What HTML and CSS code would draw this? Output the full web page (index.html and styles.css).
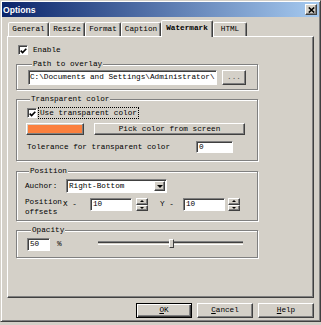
FILE: index.html
```html
<!DOCTYPE html>
<html>
<head>
<meta charset="utf-8">
<title>Options</title>
<link rel="stylesheet" href="styles.css">
</head>
<body>
<div class="window">
  <div class="titlebar">
    <span class="title">Options</span>
    <span class="close"><svg width="7" height="6" viewBox="0 0 7 6"><path d="M0.8 0.5 L6.2 5.5 M6.2 0.5 L0.8 5.5" stroke="#000" stroke-width="1.6"/></svg></span>
  </div>
  <div class="tabs">
    <div class="tab t-general">General</div>
    <div class="tab t-resize">Resize</div>
    <div class="tab t-format">Format</div>
    <div class="tab t-caption">Caption</div>
    <div class="tab t-watermark active">Watermark</div>
    <div class="tab t-html">HTML</div>
  </div>
  <div class="panel">
    <div class="check-row enable">
      <span class="cb"><svg width="7" height="6" viewBox="0 0 7 6"><path d="M0.7 2.6 L2.6 4.6 L6.3 0.7" stroke="#000" stroke-width="1.6" fill="none"/></svg></span>
      <span class="enable-text">Enable</span>
    </div>

    <div class="group g-path">
      <div class="legend">Path to overlay</div>
      <div class="row path-row">
        <div class="field path-field">C:\Documents and Settings\Administrator\</div>
        <div class="btn browse">...</div>
      </div>
    </div>

    <div class="group g-trans">
      <div class="legend">Transparent color</div>
      <div class="check-row use-row">
        <span class="cb"><svg width="7" height="6" viewBox="0 0 7 6"><path d="M0.7 2.6 L2.6 4.6 L6.3 0.7" stroke="#000" stroke-width="1.6" fill="none"/></svg></span>
        <span class="focus">Use transparent color</span>
      </div>
      <div class="row swatch-row">
        <div class="swatch"></div>
        <div class="btn pick">Pick color from screen</div>
      </div>
      <div class="row tol-row">
        <span class="tol-label">Tolerance for transparent color</span>
        <div class="field tol-field">0</div>
      </div>
    </div>

    <div class="group g-pos">
      <div class="legend">Position</div>
      <div class="row anchor-row">
        <span class="anchor-label">Auchor:</span>
        <div class="field combo">
          <span class="combo-text">Right-Bottom</span>
          <span class="dd"><span class="tri-down"></span></span>
        </div>
      </div>
      <div class="row off-row">
        <span class="off-label">Position<br>offsets</span>
        <span class="xl">X -</span>
        <div class="field num-field">10</div>
        <div class="spin spin-x"><span class="spin-btn"><span class="tri-up"></span></span><span class="spin-btn"><span class="tri-dn"></span></span></div>
        <span class="yl">Y -</span>
        <div class="field num-field">10</div>
        <div class="spin spin-y"><span class="spin-btn"><span class="tri-up"></span></span><span class="spin-btn"><span class="tri-dn"></span></span></div>
      </div>
    </div>

    <div class="group g-op">
      <div class="legend">Opacity</div>
      <div class="row op-row">
        <div class="field op-field">50</div>
        <span class="pct">%</span>
        <div class="slider">
          <div class="track"></div>
          <div class="thumb" style="left: calc(50% - 2px)"></div>
        </div>
      </div>
    </div>
  </div>
  <div class="buttons">
    <div class="btn dlg default"><u>O</u>K</div>
    <div class="btn dlg"><u>C</u>ancel</div>
    <div class="btn dlg"><u>H</u>elp</div>
  </div>
</div>
</body>
</html>
```

FILE: styles.css
```css
* { box-sizing: border-box; }
html, body { margin: 0; padding: 0; }
body {
  width: 321px;
  height: 325px;
  background: #d4d0c8;
  font-family: "Liberation Mono", "DejaVu Sans Mono", monospace;
  font-size: 7.7px;
  color: #000;
  overflow: hidden;
}
.window {
  width: 321px;
  height: 322px;
  border: 1px solid;
  border-color: #d4d0c8 #404040 #404040 #d4d0c8;
  box-shadow: inset 1px 1px #fff, inset -1px -1px #808080;
  padding: 1px;
  display: flex;
  flex-direction: column;
}
.titlebar {
  height: 15px;
  flex: 0 0 15px;
  background: linear-gradient(to right, #0a246a, #a6caf0);
  display: flex;
  align-items: center;
  justify-content: space-between;
  padding: 0 2px 0 1px;
}
.title {
  font-family: "Liberation Sans", Arial, sans-serif;
  font-weight: bold;
  font-size: 8.6px;
  color: #fff;
}
.close {
  width: 12px;
  height: 11px;
  background: #d4d0c8;
  border: 1px solid;
  border-color: #fff #404040 #404040 #fff;
  box-shadow: inset -1px -1px #808080;
  display: flex;
  align-items: center;
  justify-content: center;
}
.close svg { display: block; }

/* tabs */
.tabs {
  display: flex;
  align-items: flex-end;
  height: 16px;
  flex: 0 0 16px;
  margin: 3px 0 0 6px;
}
.tab {
  height: 14px;
  border: 1px solid;
  border-bottom: none;
  border-color: #fff #404040 transparent #fff;
  border-radius: 2px 2px 0 0;
  box-shadow: inset -1px 0 #808080;
  display: flex;
  align-items: center;
  justify-content: center;
  background: #d4d0c8;
  line-height: 9px;
}
.t-general { width: 41px; }
.t-resize { width: 36px; }
.t-format { width: 36px; }
.t-caption { width: 40px; }
.t-watermark { width: 52px; }
.t-html { width: 34px; }
.tab.active {
  height: 17px;
  margin-bottom: -1px;
  position: relative;
  z-index: 1;
  font-weight: bold;
  padding-bottom: 2px;
}

/* panel */
.panel {
  margin: 0 5px;
  height: 262px;
  flex: 0 0 262px;
  border: 1px solid;
  border-color: #fff #404040 #404040 #fff;
  box-shadow: inset -1px -1px #808080;
  padding: 8px 0 0 8px;
}
.check-row {
  display: flex;
  align-items: center;
  height: 10px;
  line-height: 9px;
}
.enable { margin-left: 2px; }
.cb {
  width: 10px;
  height: 10px;
  flex: 0 0 10px;
  background: #fff;
  border: 1px solid;
  border-color: #808080 #fff #fff #808080;
  box-shadow: inset 1px 1px #404040;
  display: flex;
  align-items: center;
  justify-content: center;
  padding: 1px 0 0 1px;
}
.cb svg { display: block; }
.enable-text { margin-left: 5px; }

.group {
  width: 242px;
  border: 1px solid #808080;
  box-shadow: inset 1px 1px #fff, 1px 1px #fff;
}
.legend {
  margin: -5px 0 0 4px;
  padding: 0 1px;
  background: #d4d0c8;
  width: fit-content;
  height: 9px;
  line-height: 9px;
}
.row { display: flex; }

.field {
  background: #fff;
  border: 1px solid;
  border-color: #808080 #fff #fff #808080;
  box-shadow: inset 1px 1px #404040;
  display: flex;
  align-items: center;
  white-space: nowrap;
  overflow: hidden;
  padding-left: 2px;
  line-height: 9px;
}
.btn {
  background: #d4d0c8;
  border: 1px solid;
  border-color: #fff #404040 #404040 #fff;
  box-shadow: inset -1px -1px #808080;
  display: flex;
  align-items: center;
  justify-content: center;
  white-space: nowrap;
  line-height: 9px;
}

/* path group */
.g-path { margin-top: 9px; padding: 0 0 4px 11px; }
.path-row { margin-top: 1px; gap: 5px; }
.path-field { width: 189px; height: 15px; padding-left: 1px; }
.browse { width: 24px; height: 15px; color: #555; }

/* transparent color group */
.g-trans { margin-top: 9px; padding: 0 0 7px 9px; }
.use-row { margin-top: 4px; }
.use-row .cb { margin-left: 1px; }
.focus {
  margin-left: 2px;
  padding: 0 1px;
  outline: 1px dotted #000;
  outline-offset: 0;
  height: 10px;
  line-height: 10px;
}
.swatch-row { margin-top: 5px; gap: 10px; }
.swatch {
  width: 58px;
  height: 12px;
  background: #fb803e;
  border: 1px solid;
  border-color: #fff #404040 #404040 #fff;
  box-shadow: inset -1px -1px #808080, inset 1px 1px #d4d0c8;
}
.pick { width: 151px; height: 12px; }
.tol-row { margin-top: 6px; align-items: center; }
.tol-label { margin-left: 1px; width: 169px; line-height: 12px; }
.tol-field { width: 37px; height: 12px; }

/* position group */
.g-pos { margin-top: 10px; padding: 0 0 3px 8px; }
.anchor-row { margin-top: 3px; align-items: center; height: 14px; }
.anchor-label { width: 41px; }
.combo { width: 101px; height: 14px; padding: 0; }
.combo-text { flex: 1; padding-left: 2px; }
.dd {
  width: 11px;
  height: 10px;
  margin: 0 1px 0 0;
  background: #d4d0c8;
  border: 1px solid;
  border-color: #fff #404040 #404040 #fff;
  box-shadow: inset -1px -1px #808080;
  display: flex;
  align-items: center;
  justify-content: center;
}
.tri-down {
  width: 0; height: 0;
  border-left: 3px solid transparent;
  border-right: 3px solid transparent;
  border-top: 3px solid #000;
}
.off-row { margin-top: 4px; align-items: flex-start; height: 20px; }
.off-label { width: 38px; line-height: 10px; }
.xl { width: 27px; line-height: 13px; margin-top: 1px; }
.yl { width: 23px; margin-left: 12px; line-height: 13px; margin-top: 1px; }
.num-field { width: 42px; height: 13px; margin-top: 1px; }
.spin {
  width: 12px;
  height: 13px;
  margin-top: 1px;
  display: flex;
  flex-direction: column;
}
.spin-x { margin-left: 4px; }
.spin-y { margin-left: 3px; }
.spin-btn {
  flex: 1;
  background: #d4d0c8;
  border: 1px solid;
  border-color: #fff #404040 #404040 #fff;
  box-shadow: inset -1px -1px #808080;
  display: flex;
  align-items: center;
  justify-content: center;
}
.tri-up {
  width: 0; height: 0;
  border-left: 2px solid transparent;
  border-right: 2px solid transparent;
  border-bottom: 2px solid #000;
}
.tri-dn {
  width: 0; height: 0;
  border-left: 2px solid transparent;
  border-right: 2px solid transparent;
  border-top: 2px solid #000;
}

/* opacity group */
.g-op { margin-top: 9px; padding: 0 0 6px 10px; }
.op-row { margin-top: 3px; align-items: flex-start; height: 13px; }
.op-field { width: 23px; height: 13px; }
.pct { margin-left: 7px; width: 5px; line-height: 13px; }
.slider {
  margin-left: 36px;
  width: 145px;
  height: 13px;
  position: relative;
}
.track {
  margin-top: 3px;
  height: 4px;
  border-top: 1px solid #808080;
  border-bottom: 1px solid #fff;
  background: linear-gradient(#404040 0 50%, #d4d0c8 50% 100%);
}
.thumb {
  position: absolute;
  top: 1px;
  width: 5px;
  height: 9px;
  background: #d4d0c8;
  border: 1px solid;
  border-color: #fff #404040 #404040 #fff;
}

/* dialog buttons */
.buttons {
  display: flex;
  justify-content: flex-end;
  gap: 5px;
  margin: 5px 5px 0 5px;
}
.dlg { width: 56px; height: 15px; }
.dlg.default {
  border: 1px solid #000;
  box-shadow: inset 1px 1px #fff, inset -1px -1px #404040, inset -2px -2px #808080;
}
u { text-decoration: underline; text-underline-offset: 1px; }
```
